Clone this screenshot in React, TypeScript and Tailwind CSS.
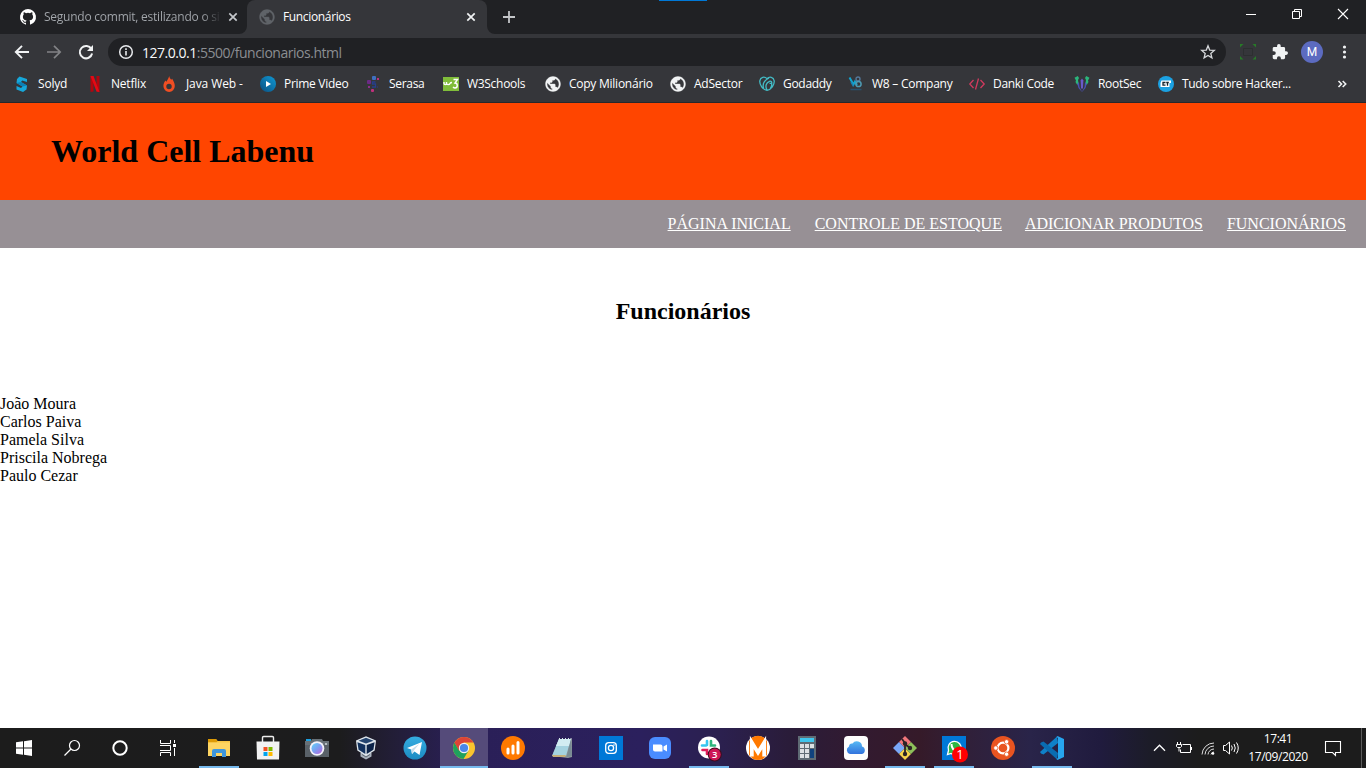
import React from "react";

type IconProps = { children: React.ReactNode; size?: number; box?: string };

function Icon({ children, size = 16, box }: IconProps) {
  return (
    <svg width={size} height={size} viewBox={box ?? `0 0 ${size} ${size}`} fill="none" className="block shrink-0 overflow-visible">
      {children}
    </svg>
  );
}

const Globe = ({ fg }: { fg: string }) => (
  <Icon box="1.300 1.300 21.400 21.400">
    <path fill={fg} stroke={fg} strokeWidth=".5" d="M12 2C6.480 2 2 6.480 2 12s4.480 10 10 10 10-4.480 10-10S17.520 2 12 2zm-1 17.930c-3.950-.49-7-3.850-7-7.930 0-.62.080-1.210.210-1.790L9 15v1c0 1.100.9 2 2 2v1.930zm6.900-2.540c-.26-.81-1-1.390-1.900-1.390h-1v-3c0-.55-.45-1-1-1H8v-2h2c.55 0 1-.45 1-1V7h2c1.100 0 2-.9 2-2v-.41c2.930 1.190 5 4.060 5 7.410 0 2.080-.8 3.970-2.100 5.390z" />
  </Icon>
);

const bookmarks: { label: string; width: string; text: string; icon: React.ReactNode }[] = [
  { label: "Solyd", width: "w-[73px]", text: "tracking-[-0.2px]", icon: (
    <Icon><path d="M5.500.5L13 3v3L8.200 4.500 7 6l6 3.500-.5 4L9 16l-6.500-2.500V10l4.500 2 1.500-1.500-6-3.500L3 3z" fill="#17a7d9" /><path d="M2.500 7L7 6l6 3.500-4.500 1z" fill="#0b7fb5" /></Icon>) },
  { label: "Netflix", width: "w-[74px]", text: "tracking-[-0.2px]", icon: (
    <Icon><path d="M3.500 0h3v15.600l-3 .4zM9.500 0h3v16l-3-.4z" fill="#b1060f" /><path d="M3.500 0h3l6 16-3-.4z" fill="#e50914" /></Icon>) },
  { label: "Java Web -", width: "w-[99px]", text: "ml-px tracking-[-0.1px]", icon: (
    <Icon><path fillRule="evenodd" d="M8.200 0c.3 2 1.300 2.600 2 3.800l1-1C12.500 5 13.800 7.500 13.800 10a5.700 5.900 0 1 1-11.400 0c0-2 .9-4.200 2-5.500l1 1.300C6.300 4 7.500 2.500 8.200 0zM8 7.800a2.700 2.700 0 1 0 .01 5.400A2.700 2.700 0 0 0 8 7.800z" fill="#f04e23" /></Icon>) },
  { label: "Prime Video", width: "w-[105px]", text: "tracking-[-0.3px]", icon: (
    <Icon><defs><linearGradient id="pv" x1="1" y1="0" x2="0" y2="1"><stop stopColor="#0f9ad6" /><stop offset="1" stopColor="#0b4f80" /></linearGradient></defs><circle cx="8" cy="8" r="8" fill="url(#pv)" /><path d="M6 5l5 3-5 3z" fill="#fff" /></Icon>) },
  { label: "Serasa", width: "w-[78px]", text: "tracking-[-0.3px]", icon: (
    <Icon><rect x="7" y="0" width="4" height="4" rx="1" fill="#3f6fc0" /><rect x="2" y="4" width="4" height="4" rx="1" fill="#6b2a86" /><rect x="12" y="2" width="2" height="2" fill="#c0307c" /><rect x="3" y="10" width="2" height="2" fill="#8d2f8d" /><rect x="6" y="13" width="3" height="3" rx="1" fill="#c0307c" /><path d="M10.500 6h-3v2h3v3h-3.500" stroke="#263f8c" strokeWidth="1.300" /><path d="M12 11h1" stroke="#263f8c" /></Icon>) },
  { label: "W3Schools", width: "w-[102px]", text: "tracking-[-0.3px]", icon: (
    <Icon><rect y="1" width="16" height="14" fill="#80bd3a" /><path d="M1 6v1.500c0 1.500 2.500 1.500 2.500 0V6v1.500c0 1.500 3 1.500 3.500 0 .5-1 1-1 2-1M10.500 3.500h4L12 7c3 0 3 5 0 5-1 0-1.500-.5-2-1" stroke="#fff" strokeWidth="1.400" /></Icon>) },
  { label: "Copy Milionário", width: "w-[125px]", text: "tracking-[-0.25px]", icon: <Globe fg="#f1f3f4" /> },
  { label: "AdSector", width: "w-[89px]", text: "tracking-[-0.25px]", icon: <Globe fg="#f1f3f4" /> },
  { label: "Godaddy", width: "w-[89px]", text: "tracking-[-0.3px]", icon: (
    <Icon><path d="M8 2.600C5.500.2 1.500.8.800 4.800c-.4 4 3 9 7.200 9.500 4.200-.5 7.600-5.500 7.200-9.500C14.500.8 10.500.2 8 2.600zM4.600 12.300C3.200 8 5.500 4.300 10 2M8 14c-2-3.500-1-7.500 2.500-8.700 1.500-.5 2.500.5 2.200 2H10.500M11.400 12.300c1-1.200 1.500-2.800 1.300-5" stroke="#43bcc6" strokeWidth="1.300" /></Icon>) },
  { label: "W8 – Company", width: "w-[121px]", text: "tracking-[-0.25px]", icon: (
    <Icon><path d="M1.500 1.500l4 7 1.500-3 2 3.500" stroke="#13a4cf" strokeWidth="2" /><path d="M3 6l2.500 4.500" stroke="#1d7fae" strokeWidth="1.500" /><circle cx="10" cy="3" r="2" stroke="#54789a" strokeWidth="1.400" /><circle cx="10.500" cy="8" r="2.600" stroke="#4d9ab3" strokeWidth="1.500" /><path d="M2.500 13.500h11" stroke="#28516d" strokeWidth="1.500" /></Icon>) },
  { label: "Danki Code", width: "w-[105px]", text: "tracking-[-0.3px]", icon: (
    <Icon><path d="M4.500 4L.8 8l3.700 4M11.500 4l3.700 4-3.700 4M9.500 2.500l-3 11" stroke="#d13a5e" strokeWidth="1.300" /></Icon>) },
  { label: "RootSec", width: "w-[84px]", text: "tracking-[-0.3px]", icon: (
    <Icon><path d="M3.800 0L.5 1.800 2 4.500l-.5 1.500L3.300 9l1.200-2-.5-3 1-2z" fill="#2bb57c" /><path d="M12.200 0l3.300 1.800L14 4.500l.5 1.500-1.800 3-1.200-2 .5-3-1-2z" fill="#2bb57c" /><path d="M3.300 8l1.700-2 .5 5L8 15.800l2.500-4.800.5-5 1.700 2-1.200 4L8 16l-3.500-4z" fill="#4a51b5" /><path d="M8 2.500l1.400 2-.4 7-1 2-1-2-.4-7z" fill="#6a5acb" /></Icon>) },
  { label: "Tudo sobre Hacker...", width: "w-[140px]", text: "tracking-[-0.33px]", icon: (
    <Icon><circle cx="8" cy="8" r="8" fill="#1ba1e2" /><path d="M3.500 4.500H13v2.500h-1.500v4h-9v-4z" fill="#fff" /><path d="M7.500 6.500H5v2.700h2.500M8.200 6.500h2.600M9.500 6.500v3.300" stroke="#15242e" strokeWidth="1.300" /></Icon>) },
];

const Close = ({ color }: { color: string }) => (
  <Icon><path d="M4.300 4.300l7.400 7.400M11.700 4.300l-7.400 7.400" stroke={color} strokeWidth="1.700" /></Icon>
);

function TabStrip() {
  return (
    <div className="flex h-[34px] shrink-0 bg-[#202124] text-[12px]">
      <div className="flex w-[239px] items-center pl-5">
        <Icon>
          <path fill="#fff" d="M8 0a8 8 0 0 0-2.530 15.590c.4.070.55-.17.55-.38l-.01-1.490c-2.230.48-2.700-.95-2.700-.95-.36-.92-.89-1.170-.89-1.170-.73-.5.060-.49.060-.49.8.060 1.230.83 1.230.83.71 1.220 1.870.87 2.330.66.070-.52.280-.87.5-1.070-1.780-.2-3.640-.89-3.640-3.950 0-.87.310-1.590.82-2.150-.080-.2-.36-1.020.080-2.120 0 0 .67-.22 2.200.82a7.600 7.600 0 0 1 4 0c1.530-1.040 2.200-.82 2.200-.82.440 1.100.160 1.920.080 2.120.51.560.82 1.280.82 2.150 0 3.070-1.870 3.750-3.650 3.950.290.250.540.73.540 1.480l-.01 2.190c0 .210.150.460.550.380A8 8 0 0 0 8 0z" />
        </Icon>
        <span className="ml-2 w-[176px] whitespace-nowrap bg-gradient-to-r from-[#a4a8ad] from-90% to-[#2c2d30] bg-clip-text tracking-[-0.24px] text-transparent">Segundo commit, estilizando o si</span>
        <span className="ml-[5px]"><Close color="#c5c8cc" /></span>
      </div>
      <div className="flex items-end"><Icon size={8}><path d="M8 0v8H0a8 8 0 0 0 8-8" fill="#35363a" /></Icon></div>
      <div className="flex w-[240px] items-center rounded-t-lg bg-[#35363a] pl-3 text-white">
        <Globe fg="#5f6368" />
        <span className="ml-2 w-[180px] tracking-[-0.35px]">Funcionários</span>
        <Close color="#f1f3f4" />
      </div>
      <div className="flex items-end"><Icon size={8}><path d="M0 0v8h8a8 8 0 0 1-8-8" fill="#35363a" /></Icon></div>
      <div className="flex w-[35px] items-center pl-[6px]">
        <Icon><path d="M8 2v12M2 8h12" stroke="#c3c5c8" strokeWidth="1.800" /></Icon>
      </div>
      <div className="ml-[129px] h-px w-12 bg-[#0078d7]" />
      <div className="ml-auto flex h-[28px] items-center gap-[30px] pr-[17px]">
        <Icon><path d="M5 8.500h10" stroke="#fff" /></Icon>
        <Icon><path d="M5.500 5.500h7v7h-7zM7.500 5.500v-2h7v7h-2" stroke="#fff" /></Icon>
        <Icon><path d="M5 3l10 10M15 3L5 13" stroke="#fff" strokeWidth="1.100" /></Icon>
      </div>
    </div>
  );
}

function Toolbar() {
  return (
    <div className="flex h-9 shrink-0 items-center bg-[#35363a] pl-[14px]">
      <Icon><path d="M15 8H2M8 1.800L1.800 8 8 14.200" stroke="#f1f3f4" strokeWidth="1.900" /></Icon>
      <div className="ml-4"><Icon><path d="M1 8h13M8 1.800L14.200 8 8 14.200" stroke="#828386" strokeWidth="1.700" /></Icon></div>
      <div className="ml-4"><Icon><path d="M13.400 5A6.200 6.200 0 1 0 14.100 9.500" stroke="#f1f3f4" strokeWidth="2" /><path d="M15 1v6H9z" fill="#f1f3f4" /></Icon></div>
      <div className="ml-[14px] flex h-7 w-[1118px] items-center rounded-full bg-[#202124] pl-[10px] text-[14px]">
        <Icon><circle cx="8" cy="8" r="6.300" stroke="#e8eaed" strokeWidth="1.500" /><path d="M8 7v4.500M8 4.300v1.600" stroke="#e8eaed" strokeWidth="1.600" /></Icon>
        <span className="ml-2 tracking-[-0.48px] text-[#8b8e92]"><span className="text-[#f8f9fa]">127.0.0.1</span>:5500/funcionarios.html</span>
        <div className="ml-auto mr-[10px]"><Icon><path d="M8 1.800l1.700 4.300 4.600.3-3.500 3 1.100 4.400L8 11.400l-3.900 2.400 1.100-4.400-3.500-3 4.600-.3z" stroke="#d6d8db" strokeWidth="1.300" /></Icon></div>
      </div>
      <div className="ml-[14px]"><Icon><path d="M0 0h3.500L0 3.500zM16 0v3.500L12.500 0zM16 15.500h-3.500L16 12zM0 15.500V12l3.500 3.500z" fill="#287a28" /><path d="M3.500 4.500h9v7h-9z" stroke="#2c2f30" /></Icon></div>
      <div className="ml-4"><Icon box="1 1 22 22"><path fill="#f1f3f4" d="M20.500 11H19V7a2 2 0 0 0-2-2h-4V3.500a2.500 2.500 0 0 0-5 0V5H4a2 2 0 0 0-2 2v3.800h1.500a2.700 2.700 0 0 1 0 5.400H2V20c0 1.100.9 2 2 2h3.800v-1.500a2.700 2.700 0 0 1 5.400 0V22H17a2 2 0 0 0 2-2v-4h1.500a2.500 2.500 0 0 0 0-5z" /></Icon></div>
      <div className="ml-[13px] flex size-[22px] items-center justify-center rounded-full bg-[#5c6bc0] font-['Roboto',sans-serif] text-[12px] text-white">M</div>
      <div className="ml-[13px]"><Icon><g fill="#f1f3f4"><circle cx="8.500" cy="3" r="1.600" /><circle cx="8.500" cy="8" r="1.600" /><circle cx="8.500" cy="13" r="1.600" /></g></Icon></div>
    </div>
  );
}

function BookmarkBar() {
  return (
    <div className="flex h-[33px] shrink-0 items-center border-b border-[#27282b] bg-[#35363a] pb-[5px] pl-[14px] text-[12px] text-white">
      {bookmarks.map((b) => (
        <div key={b.label} className={`flex shrink-0 items-center gap-2 whitespace-nowrap ${b.width}`}>
          {b.icon}
          <span className={b.text}>{b.label}</span>
        </div>
      ))}
      <div className="ml-auto mr-[16px]"><Icon><path d="M4.500 5l3 3-3 3M8.700 5l3 3-3 3" stroke="#f1f3f4" strokeWidth="1.600" /></Icon></div>
    </div>
  );
}

const links = [
  { label: "PÁGINA INICIAL", gap: "mr-6" },
  { label: "CONTROLE DE ESTOQUE", gap: "mr-[23px]" },
  { label: "ADICIONAR PRODUTOS", gap: "mr-6" },
  { label: "FUNCIONÁRIOS", gap: "mr-5" },
];

function WebPage() {
  return (
    <main className="flex h-[625px] flex-col bg-white font-['Liberation_Serif',serif] text-black">
      <header className="flex h-[97px] shrink-0 items-center bg-[#ff4500] pb-px pl-[51px]">
        <h1 className="text-[32px] leading-9 font-bold">World Cell Labenu</h1>
      </header>
      <nav className="flex h-12 shrink-0 items-center justify-end bg-[#979095] text-[16px] text-white">
        {links.map((l) => (
          <a key={l.label} className={`underline ${l.gap}`}>{l.label}</a>
        ))}
      </nav>
      <h2 className="mt-[49px] text-center text-[24px] leading-7 font-bold">Funcionários</h2>
      <ul className="mt-[70px] text-[16px] leading-[18px]">
        {["João Moura", "Carlos Paiva", "Pamela Silva", "Priscila Nobrega", "Paulo Cezar"].map((n) => <li key={n}>{n}</li>)}
      </ul>
    </main>
  );
}

type TaskApp = { name: string; icon: React.ReactNode; open?: boolean; active?: boolean };

const apps: TaskApp[] = [
  { name: "explorer", open: true, icon: <><path d="M1 3h8l1.500 2H23v15H1z" fill="#f8c544" /><path d="M1 3h8l1.500 2-1 1.500H1z" fill="#dd9a05" /><path d="M1 6.500h22V20H1z" fill="#fdd462" /><path d="M5 21v-6a2 2 0 0 1 2-2h10a2 2 0 0 1 2 2v6h-4v-4H9v4z" fill="#3f96dc" /></> },
  { name: "store", icon: <><path d="M6.500 6V1.700A1.200 1.200 0 0 1 7.700.5h8.600a1.200 1.200 0 0 1 1.200 1.200V6" stroke="#eee" strokeWidth="1.400" /><path d="M.5 5.500h23L23 23.500H1z" fill="#f2f2f2" /><path d="M7.500 11h4v4h-4z" fill="#f25022" /><path d="M12.500 11h4v4h-4z" fill="#7fba00" /><path d="M7.500 16h4v4h-4z" fill="#00a4ef" /><path d="M12.500 16h4v4h-4z" fill="#ffb900" /></> },
  { name: "camera", icon: <><defs><linearGradient id="cam" x1="0" y1="0" x2="1" y2="1"><stop stopColor="#5fd8fa" /><stop offset=".5" stopColor="#7d9cf0" /><stop offset="1" stopColor="#bd62dc" /></linearGradient></defs><path d="M1 3h5v3H1z" fill="#1ba0e1" /><path d="M7 3h10l1 2h6v16H0V5h6z" fill="#687178" /><path d="M0 9h24v12H0z" fill="#596168" /><circle cx="12" cy="12.500" r="7.300" fill="#f4f2fb" /><circle cx="12" cy="12.500" r="5.500" fill="url(#cam)" /><path d="M20 7h2v2h-2z" fill="#b6bdc2" /></> },
  { name: "virtualbox", icon: <><path d="M6.500 17v3.500L12 23.500l5.500-3V17z" fill="#a9b2bd" /><path d="M8 18.500l4 2.500 4-2.500" stroke="#5d6874" /><path d="M2 4.500L12 .3l10 4.200-1.300 10L12 20l-8.700-5.500z" fill="#dfe6ec" /><path d="M4.500 4.800L12 1.700l7.500 3.100L12 7.500z" fill="#24446f" /><path d="M3.400 6.200L11.300 9v9L4.600 13.800z" fill="#12315e" /><path d="M20.600 6.200L12.700 9v9l6.700-4.200z" fill="#0c2349" /></> },
  { name: "telegram", icon: <><defs><linearGradient id="tg" x1="0" y1="0" x2="0" y2="1"><stop stopColor="#35ade1" /><stop offset="1" stopColor="#1c8bc2" /></linearGradient></defs><circle cx="12" cy="12" r="11.500" fill="url(#tg)" /><path d="M4 12l15-6-2.500 13-5-3.500L9 18l-.8-4.500z" fill="#fff" /><path d="M8.200 13.500l8-5.500-5 6L9 18z" fill="#c6dce9" /></> },
  { name: "chrome", active: true, icon: <><circle cx="12" cy="12" r="11" fill="#fbc42e" /><path d="M2.500 6.500A11 11 0 0 1 21.500 6.500H12L7.200 14.800z" fill="#dc4437" /><path d="M2.500 6.500A11 11 0 0 0 11.500 23l5-8.300H7.200z" fill="#1fa15d" /><path d="M2.500 6.500L7 14.500 8 9z" fill="#dc4437" /><circle cx="12" cy="12" r="5.200" fill="#f2f2f2" /><circle cx="12" cy="12" r="4.100" fill="#4a86e8" /></> },
  { name: "stats", icon: <><circle cx="12" cy="12" r="12" fill="#ff7900" /><path d="M7 13v4M12 10v7M17 6.500V17" stroke="#fff" strokeWidth="3" strokeLinecap="round" /></> },
  { name: "notepad", icon: <><path d="M9 3h13v18l-4 1-16-2z" fill="#8e979c" /><path d="M9 3h12l-5 17H2z" fill="#a4d2e0" /><path d="M9 3h12l-2 7H6z" fill="#d2ecf2" /><path d="M21 3l1 17-5.500 1z" fill="#788b94" /><path d="M9 3l1-1M12 3l1-1M15 3l1-1M18 3l1-1M20.500 3l1-1" stroke="#dce5e8" /><path d="M2 19h14l-1 2-12 0z" fill="#c6af79" /></> },
  { name: "instagram", icon: <><path d="M0 0h24v24H0z" fill="#0078d7" /><rect x="6.700" y="6.700" width="10.600" height="10.600" rx="3" stroke="#fff" strokeWidth="1.300" /><circle cx="12" cy="12" r="2.600" stroke="#fff" strokeWidth="1.300" /><circle cx="15" cy="9" r=".8" fill="#fff" /></> },
  { name: "zoom", icon: <><rect x="1" y="1" width="22" height="22" rx="6" fill="#4a8cff" /><path d="M5 8.500h7.500a2 2 0 0 1 2 2v5H7a2 2 0 0 1-2-2zM15.500 10.500L19 8.500v7l-3.500-2z" fill="#fff" /></> },
  { name: "slack", open: true, icon: <><circle cx="12" cy="11.500" r="11" fill="#fff" /><path d="M10 5v4M5 9.500h4" stroke="#36c5f0" strokeWidth="2.600" strokeLinecap="round" /><path d="M14 5v4.500h4" stroke="#2eb67d" strokeWidth="2.600" strokeLinecap="round" /><path d="M10 18v-4H5.500" stroke="#e01e5a" strokeWidth="2.600" strokeLinecap="round" /><circle cx="17.700" cy="18.500" r="7" fill="#3f0b1c" /><circle cx="17.700" cy="18.500" r="6" fill="#cd1655" /><text x="17.700" y="22" fontSize="9.500" fontWeight="600" textAnchor="middle" fill="#fff">3</text></> },
  { name: "metro", icon: <><circle cx="12" cy="12" r="12" fill="#fff" /><path d="M6 1.600a12 12 0 0 1 12 0l3 3.500v14l-4 3.800a12 12 0 0 1-10 0l-4-3.800v-14z" fill="#ff7900" /><path d="M5.800 20.500V6.500L12 16.500l6.200-10v14" stroke="#fff" strokeWidth="3.800" /></> },
  { name: "calculator", icon: <><path d="M3 0h18v24H3z" fill="#5f6b74" /><path d="M5 2h14v4H5z" fill="#3fc5ed" /><path d="M5 8h4v4H5zM10 8h4v4h-4zM15 8h4v4h-4zM5 13h4v4H5zM10 13h4v4h-4zM5 18h4v4H5zM10 18h4v4h-4z" fill="#dce0e3" /><path d="M15 13h4v9h-4z" fill="#10427e" /></> },
  { name: "icloud", icon: <><defs><linearGradient id="ic" x1="0" y1="0" x2="0" y2="1"><stop stopColor="#57b9f4" /><stop offset="1" stopColor="#3172dc" /></linearGradient></defs><rect width="24" height="24" rx="4" fill="#fdfdfd" /><path d="M6 18a4 4 0 0 1-1-7.500 3.200 3.200 0 0 1 3.500-3A5.200 5.200 0 0 1 18 10.500 3.900 3.900 0 0 1 18 18z" fill="url(#ic)" /></> },
  { name: "git", open: true, icon: <><path d="M12 0l6 6-6 6-6-6z" fill="#f1777b" /><path d="M6 6l6 6-6 6-6-6z" fill="#7aa8f8" /><path d="M12 12l6 6-6 6-6-6z" fill="#f6d24a" /><path d="M18 6l6 6-6 6-6-6z" fill="#8dc05a" /><path d="M9 3l3 4v11M12 8l5 4" stroke="#2c2426" strokeWidth="1.800" /><g fill="#2c2426"><circle cx="12" cy="7.500" r="2.200" /><circle cx="12" cy="18" r="2.200" /><circle cx="17" cy="12" r="2.200" /></g></> },
  { name: "whatsapp", open: true, icon: <><path d="M0 0h24v24H0z" fill="#0078d7" /><path d="M5.500 18.500l1-4A6.600 6.600 0 1 1 9 17.500z" fill="#2cb742" stroke="#fff" strokeWidth="1.300" /><path d="M9.500 8c0 4 2 6.500 6 7" stroke="#fff" strokeWidth="2" /><circle cx="18" cy="18.500" r="8" fill="#f00" /><text x="18" y="23.200" fontSize="13" textAnchor="middle" fill="#fff">1</text></> },
  { name: "ubuntu", icon: <><circle cx="12" cy="12" r="12" fill="#e95420" /><circle cx="12" cy="12" r="5.400" stroke="#fff" strokeWidth="2.200" /><g fill="#fff" stroke="#e95420" strokeWidth=".8"><circle cx="4.800" cy="12" r="2.200" /><circle cx="15.600" cy="5.800" r="2.200" /><circle cx="15.600" cy="18.200" r="2.200" /></g></> },
  { name: "vscode", open: true, icon: <><path d="M18 7L3.500 18.500 1 17.500 0 16 17 .5z" fill="#0f80c8" /><path d="M18 17L3.500 5.500 1 6.500 0 8l17 15.500z" fill="#0a6cb1" /><path d="M17.500 0L24 3v18l-6.500 3-1-1 1.500-1V2l-1.500-1z" fill="#27a5ee" /></> },
];

function Taskbar() {
  return (
    <footer className="flex h-10 shrink-0 items-stretch bg-[linear-gradient(90deg,#1c1c1c_0px,#1c1c1d_340px,#231e3a_400px,#2a1f57_460px,#2b205d_640px,#2b204f_720px,#2a1c39_790px,#321a30_860px,#351a29_920px,#30203a_970px,#292449_1030px,#201b3e_1100px,#1c1c28_1150px,#1c1c1c_1200px)]">
      <div className="flex w-12 items-center justify-center"><Icon><path d="M0 2.300L7 1.300v6.200H0zM8 1.200L16 0v7.500H8zM0 8.500h7v6.200l-7-1zM8 8.500h8V16l-8-1.200z" fill="#fff" /></Icon></div>
      <div className="flex w-12 items-center justify-center"><Icon><circle cx="10.500" cy="5.500" r="5" stroke="#fff" strokeWidth="1.200" /><path d="M7 9L.5 15.500" stroke="#fff" strokeWidth="1.300" /></Icon></div>
      <div className="flex w-12 items-center justify-center"><Icon><circle cx="8" cy="8" r="6.700" stroke="#fff" strokeWidth="2" /></Icon></div>
      <div className="flex w-[51px] items-center pl-4"><Icon><path d="M.5 0v3.500h10V0M.5 16v-3.500h10V16M0 5.500h10.500v5H0" stroke="#fff" /><path d="M14.500 0v3M14.500 8v8" stroke="#fff" /><path d="M13 4h3v3h-3z" fill="#fff" /></Icon></div>
      {apps.map((a) => (
        <div key={a.name} className="flex w-[49px] shrink-0">
          <div className={`flex w-12 flex-col items-center ${a.active ? "bg-[#554b7a]" : ""}`}>
            <div className="flex h-[38px] items-center pt-[2px]"><Icon size={24}>{a.icon}</Icon></div>
            {a.open && <div className="h-[2px] w-10 bg-[#76b9ed]" />}
            {a.active && <div className="h-[2px] w-12 bg-[#76b9ed]" />}
          </div>
        </div>
      ))}
      <div className="ml-auto flex items-center text-[12px] leading-[18px] text-white">
        <Icon><path d="M2 10.700L7.500 5.200l5.500 5.500" stroke="#fff" strokeWidth="1.300" /></Icon>
        <div className="ml-2"><Icon><path d="M6.500 4.500h8v8h-10V9.500M15.500 7v3M1.500 2v2.500M4.500 2v2.500M.5 4.500h5v2l-1 1h-3l-1-1zM3 7.500v4" stroke="#fff" /></Icon></div>
        <div className="ml-2"><Icon><path d="M2 14.500A12 12 0 0 1 14 3M5 14.500A9 9 0 0 1 14 6M8 14.500A6 6 0 0 1 14 9M11 14.500A3 3 0 0 1 14 12" stroke="#ddd" /><circle cx="13" cy="13.500" r="1.300" fill="#fff" /></Icon></div>
        <div className="ml-[7px]"><Icon><path d="M.5 5.500h2L6.500 2v12l-4-3.500h-2zM8.500 5.500q1.700 2.500 0 5M11 4q2.500 4 0 8M13.500 2.500q3.500 5.500 0 11" stroke="#fff" /></Icon></div>
        <div className="ml-[6px] flex w-[66px] flex-col items-center pb-px tracking-[-0.42px]"><span>17:41</span><span>17/09/2020</span></div>
        <div className="ml-[14px]"><Icon><path d="M.5 1.500h15v11h-5v3l-3-3h-7z" stroke="#fff" strokeWidth="1.100" /></Icon></div>
        <div className="ml-5 h-10 w-px bg-[#5b5b5b]" />
        <div className="w-1" />
      </div>
    </footer>
  );
}

export default function App() {
  return (
    <div className="flex h-[768px] w-[1366px] flex-col overflow-hidden font-['Open_Sans',sans-serif]">
      <TabStrip />
      <Toolbar />
      <BookmarkBar />
      <WebPage />
      <Taskbar />
    </div>
  );
}
